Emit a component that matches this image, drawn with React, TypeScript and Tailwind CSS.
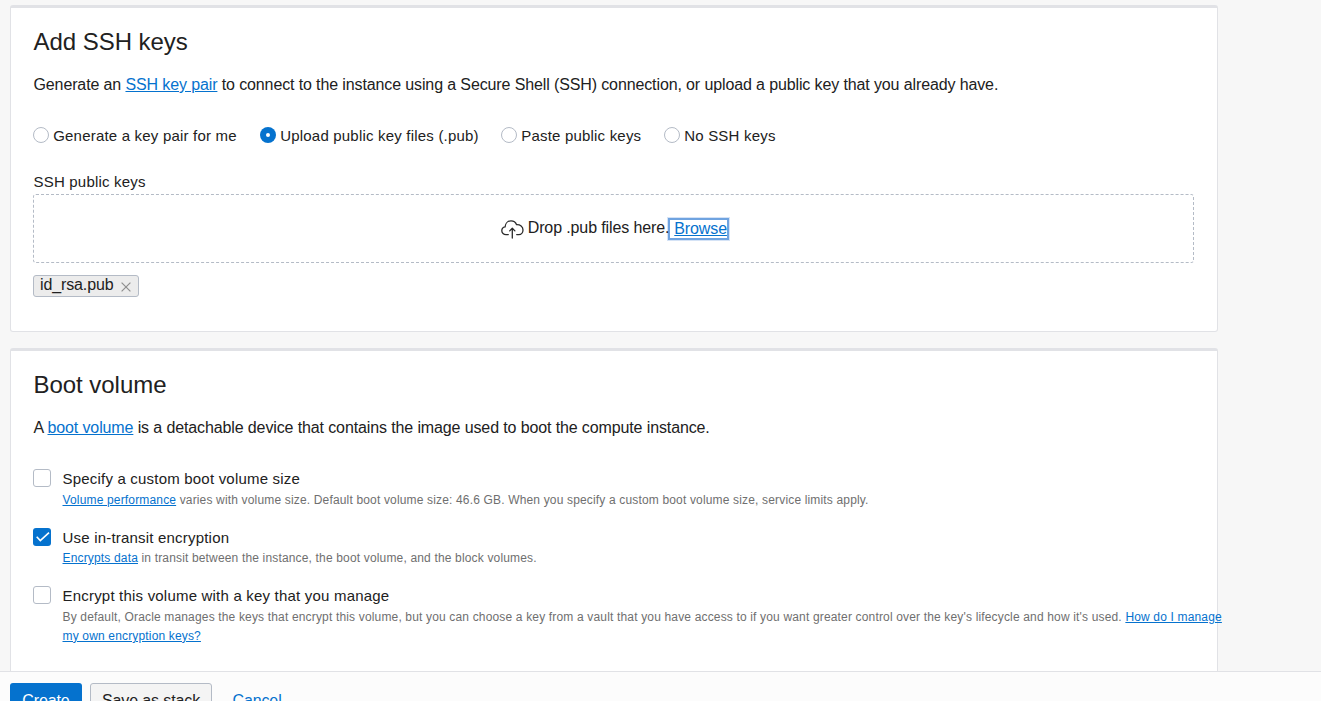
import type { ReactNode } from 'react';

function Link({ children }: { children: ReactNode }) {
  return (
    <a href="#" className="text-[#0572ce] underline">
      {children}
    </a>
  );
}

function Card({ title, className, children }: { title: string; className: string; children: ReactNode }) {
  return (
    <section
      className={`w-[1208px] shrink-0 rounded-[3px] border border-t-[3px] border-[#e1e2e6] bg-white pr-[23px] pl-[22px] pt-5 ${className}`}
    >
      <h2 className="pl-[0.5px] text-2xl leading-[28px] tracking-[-0.04px]">{title}</h2>
      {children}
    </section>
  );
}

function Radio({ label, checked = false, className }: { label: string; checked?: boolean; className: string }) {
  return (
    <label className={`flex shrink-0 items-center gap-[4.2px] ${className}`}>
      <span
        className={
          checked
            ? 'flex size-4 items-center justify-center rounded-full bg-[#0572ce]'
            : 'size-4 rounded-full border border-[#b4bbc6] bg-white'
        }
      >
        {checked && <span className="size-1 rounded-full bg-white" />}
      </span>
      <span className="pt-0.5 text-[15px] leading-[18px] tracking-[0.2px] whitespace-nowrap">{label}</span>
    </label>
  );
}

function Option({
  label,
  checked = false,
  className,
  children,
}: {
  label: string;
  checked?: boolean;
  className: string;
  children: ReactNode;
}) {
  return (
    <div className={`flex items-start ${className}`}>
      <span
        className={
          checked
            ? 'mr-[11.5px] flex size-[18px] shrink-0 items-center justify-center rounded-[3px] bg-[#0572ce]'
            : 'mr-[11.5px] size-[18px] shrink-0 rounded-[3px] border border-[#b4bbc6] bg-white'
        }
      >
        {checked && (
          <svg width="18" height="18" viewBox="0 0 18 18" fill="none" stroke="#fff" strokeWidth="1.6">
            <path d="M3.7 8.8 L7.3 12.6 L16 4.6" />
          </svg>
        )}
      </span>
      <div className="w-[1170px] shrink-0">
        <div className="pt-px text-[15px] leading-[18px] tracking-[0.2px]">{label}</div>
        <div className="pt-[2.9px] text-xs leading-[19px] tracking-[0.162px] text-[#6f6f6f]">{children}</div>
      </div>
    </div>
  );
}

export default function App() {
  return (
    <div className="flex h-[701px] w-[1321px] flex-col overflow-hidden bg-[#f7f7f7] font-['Liberation_Sans',Arial,sans-serif] text-[#212121]">
      <main className="flex h-[671px] shrink-0 flex-col overflow-hidden pt-[5px] pl-[10px]">
        <Card title="Add SSH keys" className="h-[327px]">
          <p className="mt-[17px] pl-[0.5px] text-base leading-6 tracking-[-0.12px]">
            Generate an <Link>SSH key pair</Link> to connect to the instance using a Secure Shell (SSH) connection, or
            upload a public key that you already have.
          </p>
          <div className="mt-[28px] flex h-5 items-center">
            <Radio label="Generate a key pair for me" className="w-[227px]" />
            <Radio label="Upload public key files (.pub)" checked className="w-[241px]" />
            <Radio label="Paste public keys" className="w-[163px]" />
            <Radio label="No SSH keys" className="w-[120px]" />
          </div>
          <div className="mt-[28px] pl-[0.5px] text-[15px] leading-[18px] tracking-[0.2px]">SSH public keys</div>
          <div className="mt-[3px] flex h-[69px] items-start justify-center rounded-[3px] border border-dashed border-[#b4bbc6] pt-[23px] pl-[3px]">
            <svg
              className="mt-[2px] mr-1"
              width="23"
              height="19"
              viewBox="0 0 23 19"
              fill="none"
              stroke="#2b2b2b"
              strokeWidth="1.3"
              strokeLinecap="round"
              strokeLinejoin="round"
            >
              <path d="M7.3 14.6 H5 C2.6 14.6 0.8 12.9 0.8 10.7 C0.8 8.7 2.1 7.2 4.1 6.9 C4.3 3.4 6.8 0.9 10 0.9 C12.6 0.9 14.6 2.2 15.6 4.7 C19.2 4.5 22 6.6 22 9.9 C22 12.6 20.2 14.6 17.8 14.6 H15.7" />
              <path d="M11.3 18 V8.3 M8.7 10.9 L11.3 8.2 L13.9 10.9" />
            </svg>
            <span className="z-10 -mr-px text-base leading-5 tracking-[-0.12px]">Drop .pub files here.</span>
            <a
              href="#"
              className="h-[22px] w-[61px] border-2 border-[#6fa3e0] pl-[4px] text-base leading-[18px] tracking-[-0.12px] text-[#0572ce] underline shadow-[0_0_0_1px_#d5e3f6]"
            >
              Browse
            </a>
          </div>
          <div className="mt-3 flex h-[22px] w-[106px] items-start rounded-[3px] border border-[#b4bbc6] bg-[#ececec] pl-1.5">
            <span className="text-base leading-[18px] tracking-[-0.12px]">id_rsa.pub</span>
            <svg className="mt-[6px] ml-[7px]" width="10" height="10" viewBox="0 0 10 10" stroke="#8e8e8e" strokeWidth="1.2">
              <path d="M0.6 0.6 L9.4 9.4 M9.4 0.6 L0.6 9.4" />
            </svg>
          </div>
        </Card>

        <Card title="Boot volume" className="mt-4 h-[400px]">
          <p className="mt-[17px] pl-[0.5px] text-base leading-6 tracking-[-0.12px]">
            A <Link>boot volume</Link> is a detachable device that contains the image used to boot the compute
            instance.
          </p>
          <Option label="Specify a custom boot volume size" className="mt-[29px] h-[58.5px]">
            <Link>Volume performance</Link> varies with volume size. Default boot volume size: 46.6 GB. When you specify
            a custom boot volume size, service limits apply.
          </Option>
          <Option label="Use in-transit encryption" checked className="h-[58.5px]">
            <Link>Encrypts data</Link> in transit between the instance, the boot volume, and the block volumes.
          </Option>
          <Option label="Encrypt this volume with a key that you manage" className="h-[60px]">
            By default, Oracle manages the keys that encrypt this volume, but you can choose a key from a vault that you
            have access to if you want greater control over the key's lifecycle and how it's used.{' '}
            <Link>
              How do I manage
              <br />
              my own encryption keys?
            </Link>
          </Option>
        </Card>
      </main>

      <footer className="flex h-[60px] shrink-0 items-start border-t border-[#e1e2e6] bg-[#fcfcfc] pt-[11px] pl-[10px] text-base leading-[36px] tracking-[-0.12px]">
        <button className="h-[36px] w-[72px] rounded-[3px] bg-[#0572ce] text-white">Create</button>
        <button className="ml-2 h-[36px] w-[122px] rounded-[3px] border border-[#b4bbc6] bg-[#f4f4f4] leading-[34px]">
          Save as stack
        </button>
        <a href="#" className="ml-[20.5px] text-[#0572ce]">
          Cancel
        </a>
      </footer>
    </div>
  );
}
